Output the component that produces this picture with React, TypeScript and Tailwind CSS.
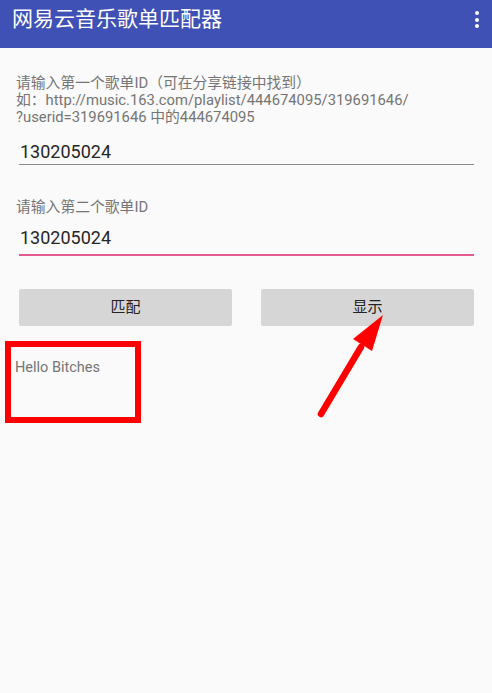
import React from 'react';

const font = { fontFamily: "Roboto, 'Noto Sans CJK SC', sans-serif" };

// full-width punctuation drawn centred in its own em box, as on the device
const Punct = ({ ch }: { ch: string }) => (
  <span className="inline-block w-[1em] text-center">{ch}</span>
);

export default function App() {
  return (
    <div className="relative w-[492px] h-[693px] bg-[#fafafa] overflow-hidden" style={font}>
      {/* App bar */}
      <div className="h-12 bg-[#3f51b5] flex items-start justify-between pl-3 pr-[13px]">
        <span className="pt-[5px] text-[21px] leading-[28px] text-white">网易云音乐歌单匹配器</span>
        <div className="flex flex-col items-center gap-[2.5px] pt-[11px]">
          <span className="w-1 h-1 rounded-full bg-white" />
          <span className="w-1 h-1 rounded-full bg-white" />
          <span className="w-1 h-1 rounded-full bg-white" />
        </div>
      </div>

      <div className="pt-[27px] px-4">
        <p className="text-[14.8px] leading-[17px] text-[#757575]">
          请输入第一个歌单ID<Punct ch="（" />可在分享链接中找到<Punct ch="）" />
          <br />
          如<Punct ch="：" />http://music.163.com/playlist/444674095/319691646/
          <br />
          ?userid=319691646 中的444674095
        </p>

        <div className="mt-[13px] ml-[3px] mr-[2px] border-b border-[#8a8a8a]">
          <div className="pl-[1px] text-[18px] leading-[25px] text-[#262626]">130205024</div>
        </div>

        <p className="mt-[34px] text-[14.8px] leading-[17px] text-[#757575]">请输入第二个歌单ID</p>

        <div className="mt-[10px] ml-[3px] mr-[2px] pb-[4px] border-b-2 border-[#e45b92]">
          <div className="pl-[1px] text-[18px] leading-6 text-[#262626]">130205024</div>
        </div>

        <div className="mt-[33px] ml-[3px] mr-[2px] flex gap-[29px]">
          <button className="flex-1 h-[37px] rounded-[2px] bg-[#d6d6d7] text-[15px] text-[#222]">匹配</button>
          <button className="flex-1 h-[37px] rounded-[2px] bg-[#d6d6d7] text-[15px] text-[#222]">显示</button>
        </div>

        <p className="mt-[33px] -ml-px text-[14.5px] leading-[17px] text-[#757575]">Hello Bitches</p>
      </div>

      {/* annotation: red box */}
      <div className="absolute left-[5px] top-[341px] w-[136px] h-[82px] border-[6px] border-[#ff0000]" />

      {/* annotation: red arrow */}
      <svg className="absolute left-[300px] top-[300px]" width="100" height="125" viewBox="0 0 100 125">
        <line x1="21" y1="114" x2="61" y2="47" stroke="#ff0000" strokeWidth="6.5" strokeLinecap="round" />
        <polygon points="83,15 53,39 72,51" fill="#ff0000" />
      </svg>
    </div>
  );
}
